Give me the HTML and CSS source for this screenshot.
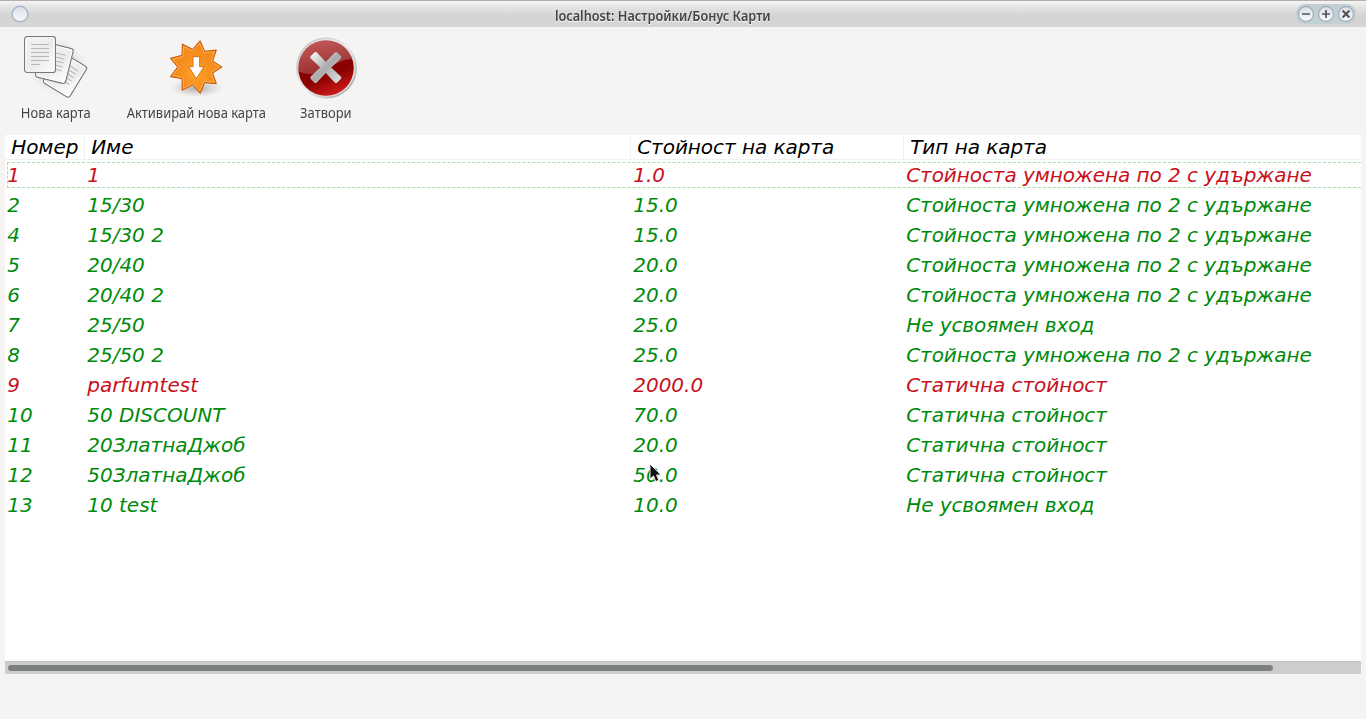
FILE: index.html
```html
<!DOCTYPE html>
<html lang="bg">
<head>
<meta charset="utf-8">
<title>localhost: Настройки/Бонус Карти</title>
<link rel="stylesheet" href="styles.css">
</head>
<body>
<header class="titlebar">
  <svg class="orb" width="18" height="18" viewBox="0 0 18 18"><circle cx="9" cy="9" r="7.8" fill="url(#orb)" stroke="#a9b5cb" stroke-width="1.4"/></svg>
  <h1 class="title">localhost: Настройки/Бонус Карти</h1>
  <div class="controls">
    <svg width="60" height="20" viewBox="0 0 60 20">
      <defs><linearGradient id="orb" x1="0" y1="0" x2="0" y2="1"><stop offset="0" stop-color="#d8e1ec"/><stop offset="1" stop-color="#f8f9fc"/></linearGradient></defs>
      <g fill="url(#orb)" stroke="#a5b0c7" stroke-width="1.3"><circle cx="10" cy="10" r="7.5"/><circle cx="30" cy="10" r="7.5"/><circle cx="50" cy="10" r="7.5"/></g>
      <g stroke="#555" stroke-width="1.7" fill="none"><path d="M6 10h8M26 10h8M30 6v8"/><path stroke-width="2.1" d="M46.600 6.600l6.800 6.800M53.400 6.600l-6.800 6.800"/></g>
    </svg>
  </div>
</header>
<nav class="toolbar">
  <button class="tool tool-new">
    <svg width="70" height="68" viewBox="0 0 70 68">
      <defs>
        <linearGradient id="paper" x1="0" y1="0" x2="1" y2="1"><stop offset="0" stop-color="#f3f3f3"/><stop offset=".55" stop-color="#ebebeb"/><stop offset="1" stop-color="#fff"/></linearGradient>
        <filter id="soft" x="-50%" y="-50%" width="200%" height="200%"><feGaussianBlur stdDeviation="3"/></filter>
        <g id="sheet"><rect x=".6" y=".6" width="30.8" height="35.8" rx="2.5" fill="url(#paper)" stroke="#777a76" stroke-width="1.2"/><rect x="1.8" y="1.8" width="28.4" height="33.4" rx="1.4" fill="none" stroke="#fff"/><path d="M7 8.500h18M7 12.500h18M7 16.500h18M7 20.500h18M7 24.500h18M7 28.500h9" stroke="#b9b9b1" stroke-width="1.1"/></g>
      </defs>
      <path d="M9 35L42 8l20 20-15 32-25-8z" fill="#999" opacity=".2" filter="url(#soft)"/>
      <use href="#sheet" transform="translate(40 17.600) rotate(31.500)"/>
      <use href="#sheet" transform="translate(22.300 8) rotate(14)"/>
      <use href="#sheet" transform="translate(3 3)"/>
    </svg>
    <span class="tool-label">Нова карта</span>
  </button>
  <button class="tool tool-activate">
    <svg width="64" height="68" viewBox="132 15 192 204">
      <defs>
        <radialGradient id="orange" cx=".5" cy=".6" r=".6"><stop offset="0" stop-color="#ffa42c"/><stop offset=".55" stop-color="#f58c1b"/><stop offset="1" stop-color="#f28a1c"/></radialGradient>
        <radialGradient id="shade"><stop offset="0" stop-color="#777" stop-opacity=".6"/><stop offset="1" stop-color="#999" stop-opacity="0"/></radialGradient>
      </defs>
      <ellipse cx="229" cy="180" rx="80" ry="27" fill="url(#shade)"/>
      <path fill="url(#orange)" stroke="#c75208" stroke-width="3" d="M306 117L278 135 289 167 254 164 241 196 218 170 187 187 186 152 151 146 173 117 151 91 186 82 187 48 218 64 240 38 254 70 289 66 278 99Z"/>
      <path fill="none" stroke="#ffb65a" stroke-width="2.4" d="M299 117L274 133 283 162 252 160 239 188 217 166 191 181 189 149 159 142 178 117 159 94 189 85 191 55 217 69 239 46 252 74 283 72 274 101Z"/>
      <path fill="#fff" stroke="#dd710f" stroke-width="3" d="M219 86h20v30h13l-23 36-23-36h13z"/>
    </svg>
    <span class="tool-label">Активирай нова карта</span>
  </button>
  <button class="tool tool-close">
    <svg width="64" height="68" viewBox="-0.500 0 64 68">
      <defs>
        <linearGradient id="ring" x1="0" y1="0" x2="1" y2="1"><stop offset="0" stop-color="#b5b5b7"/><stop offset=".5" stop-color="#ececef"/><stop offset="1" stop-color="#9a9a9e"/></linearGradient>
        <linearGradient id="red" x1=".3" y1="0" x2=".7" y2="1"><stop offset="0" stop-color="#a81212"/><stop offset=".45" stop-color="#850000"/><stop offset=".65" stop-color="#8d0202"/><stop offset="1" stop-color="#d51c1c"/></linearGradient>
        <linearGradient id="gloss" x1="0" y1="0" x2="0" y2="1"><stop offset="0" stop-color="#fff" stop-opacity=".3"/><stop offset="1" stop-color="#fff" stop-opacity=".2"/></linearGradient>
        <linearGradient id="cross" x1="0" y1="0" x2="1" y2="1"><stop offset="0" stop-color="#fff"/><stop offset=".5" stop-color="#aaa"/><stop offset="1" stop-color="#e4e4e4"/></linearGradient>
      </defs>
      <circle cx="32" cy="35" r="30.5" fill="url(#ring)"/>
      <circle cx="32" cy="35" r="28.7" fill="#e2e2e5"/>
      <circle cx="31.5" cy="35" r="27.8" fill="url(#red)"/>
      <path d="M3.800 38A27.800 27.800 0 0 1 58 26C47 26 40 32 31 37 21 42 11 42 3.800 38Z" fill="url(#gloss)"/>
      <path transform="translate(-.2 .5)" fill="url(#cross)" d="M20 19q1.300-1.200 2.600 0L31.500 28.500 40.500 19q1.300-1.200 2.600 0l3.400 3.400q1.200 1.300 0 2.600L37 34l9.500 9q1.200 1.300 0 2.600L43 49q-1.300 1.200-2.600 0L31.500 39.500 22.500 49q-1.300 1.200-2.600 0L16.500 45.600q-1.200-1.300 0-2.600L26 34l-9.500-9q-1.200-1.300 0-2.600z"/>
    </svg>
    <span class="tool-label">Затвори</span>
  </button>
</nav>
<main class="panel">
  <div class="row head"><span>Номер</span><span>Име</span><span>Стойност на карта</span><span>Тип на карта</span></div>
  <div class="row red focused"><span>1</span><span>1</span><span>1.0</span><span>Стойноста умножена по 2 с удържане</span></div>
  <div class="row"><span>2</span><span>15/30</span><span>15.0</span><span>Стойноста умножена по 2 с удържане</span></div>
  <div class="row"><span>4</span><span>15/30 2</span><span>15.0</span><span>Стойноста умножена по 2 с удържане</span></div>
  <div class="row"><span>5</span><span>20/40</span><span>20.0</span><span>Стойноста умножена по 2 с удържане</span></div>
  <div class="row"><span>6</span><span>20/40 2</span><span>20.0</span><span>Стойноста умножена по 2 с удържане</span></div>
  <div class="row"><span>7</span><span>25/50</span><span>25.0</span><span>Не усвоямен вход</span></div>
  <div class="row"><span>8</span><span>25/50 2</span><span>25.0</span><span>Стойноста умножена по 2 с удържане</span></div>
  <div class="row red"><span>9</span><span>parfumtest</span><span>2000.0</span><span>Статична стойност</span></div>
  <div class="row"><span>10</span><span>50 DISCOUNT</span><span>70.0</span><span>Статична стойност</span></div>
  <div class="row"><span>11</span><span>20ЗлатнаДжоб</span><span>20.0</span><span>Статична стойност</span></div>
  <div class="row"><span>12</span><span>50ЗлатнаДжоб</span><span>50.0</span><span>Статична стойност</span></div>
  <div class="row"><span>13</span><span>10 test</span><span>10.0</span><span>Не усвоямен вход</span></div>
</main>
<div class="scrollbar"><div class="thumb"></div></div>
<svg class="cursor" width="14" height="20" viewBox="0 0 14 20"><path d="M1 1v15l3.500-3 2.300 5.500 3-1.300-2.300-5.200H12z" fill="#111" stroke="#e8e8e8" stroke-width="1"/></svg>
</body>
</html>
```
FILE: styles.css
```css
* { box-sizing: border-box; }
body { margin: 0; width: 1366px; height: 719px; overflow: hidden; background: #f5f4f2; display: flex; flex-direction: column; }
svg { display: block; }
.titlebar { height: 27px; flex: none; display: grid; grid-template-columns: 69px 1fr 69px; align-items: center; border-top: 1px solid #b5aca6; background: linear-gradient(#f4f4f4, #dedede 35%, #d3d3d3 60%, #d6d6d6); }
.orb { margin-left: 11px; }
.title { margin: 3px 41px 0 0; text-align: center; font: 600 13.5px/18px "Noto Sans", sans-serif; color: #404448; text-shadow: 0 1px 1px #fff; white-space: nowrap; width: max-content; justify-self: center; transform: scaleX(.94); }
.controls { width: 60px; height: 20px; border-radius: 9px; background: #c3d0d0; margin-left: -1px; }
.toolbar { height: 108px; flex: none; display: flex; align-items: flex-start; padding: 6px 0 0 16px; }
.tool { border: 0; background: none; padding: 0; margin: 0; display: flex; flex-direction: column; align-items: center; }
.tool-new { width: 80px; }
.tool-activate { width: 160px; margin-left: 20px; }
.tool-close { width: 64px; margin-left: 18px; }
.tool-label { margin-top: 2px; font: 14px/20px "Noto Sans", sans-serif; color: #41464b; white-space: nowrap; transform: scaleX(.925); }
.panel { margin: 0 5px; height: 526px; flex: none; background: #fff; }
.row { display: grid; grid-template-columns: 80px 546px 273px 1fr; height: 30px; line-height: 30px; font-family: "DejaVu Sans", sans-serif; font-size: 20px; font-style: oblique; color: #008a0b; white-space: nowrap; }
.row span { padding-left: 2.2px; }
.row:not(.head) span:last-child { letter-spacing: -.07px; }
.row.head { height: 25px; line-height: 25px; color: #000; border-bottom: 1px solid #f1f1f1; }
.row.head span { padding-left: 6.2px; letter-spacing: -.05px; border-right: 1px solid #f1f1f1; }
.row.head span:last-child { border: 0; }
.row.red { color: #c9101c; }
.row.focused { height: 26px; margin: 2px 0 2px 2px; border: 1px dashed #a9dfac; border-right: 0; grid-template-columns: 77px 546px 273px 1fr; }
.row.focused span { line-height: 24px; }
.row.focused span:first-child { padding-left: 0; margin-left: -.8px; }
.scrollbar { height: 13px; flex: none; margin: 0 5px; padding: 3px 3px 3px; background: #cdcdcd; border-top: 1px solid #c2c2c0; }
.thumb { width: 1265px; height: 6px; border-radius: 3px; background: #7c817f; }
.cursor { position: absolute; left: 649px; top: 463px; }
```
